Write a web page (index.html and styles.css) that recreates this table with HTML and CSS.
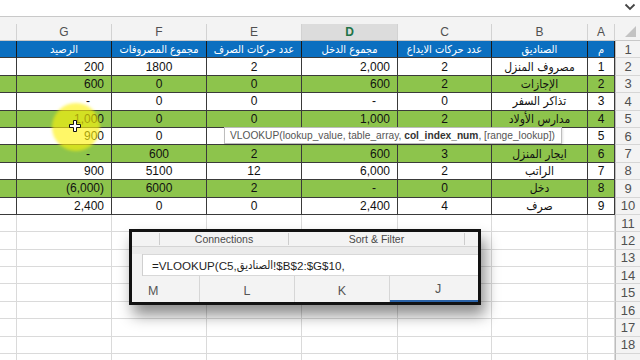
FILE: index.html
```html
<!DOCTYPE html>
<html lang="ar">
<head>
<meta charset="utf-8">
<link rel="stylesheet" href="styles.css">
</head>
<body>
<div class="screen">
  <div class="topbar">
    <svg class="chev" width="12" height="8" viewBox="0 0 12 8"><polyline points="1.5,1.5 6,6 10.5,1.5" fill="none" stroke="#444" stroke-width="1.8"/></svg>
  </div>
  <div class="gapband"></div>
  <div class="sheet">
    <!-- column headers -->
    <div class="ch"></div><div class="ch">G</div><div class="ch">F</div><div class="ch">E</div><div class="ch sel">D</div><div class="ch">C</div><div class="ch">B</div><div class="ch">A</div><div class="ch corner"><span class="tri"></span></div>
    <!-- row 1 -->
    <div class="c t hb"></div><div class="c t hb m ar">الرصيد</div><div class="c t hb m ar">مجموع المصروفات</div><div class="c t hb m ar">عدد حركات الصرف</div><div class="c t hb m ar">مجموع الدخل</div><div class="c t hb m ar">عدد حركات الايداع</div><div class="c t hb m ar">الصناديق</div><div class="c t hb m ar">م</div><div class="rn">1</div>
    <!-- row 2 -->
    <div class="c t"></div><div class="c t r">200</div><div class="c t m">1800</div><div class="c t m">2</div><div class="c t r">2,000</div><div class="c t m">2</div><div class="c t m ar body">مصروف المنزل</div><div class="c t m">1</div><div class="rn">2</div>
    <!-- row 3 -->
    <div class="c t g"></div><div class="c t g r">600</div><div class="c t g m">0</div><div class="c t g m">0</div><div class="c t g r">600</div><div class="c t g m">2</div><div class="c t g m ar body">الإجازات</div><div class="c t g m">2</div><div class="rn">3</div>
    <!-- row 4 -->
    <div class="c t"></div><div class="c t r dash">-</div><div class="c t m">0</div><div class="c t m">0</div><div class="c t r dash">-</div><div class="c t m">0</div><div class="c t m ar body">تذاكر السفر</div><div class="c t m">3</div><div class="rn">4</div>
    <!-- row 5 -->
    <div class="c t g"></div><div class="c t g r">1,000</div><div class="c t g m">0</div><div class="c t g m">0</div><div class="c t g r">1,000</div><div class="c t g m">2</div><div class="c t g m ar body">مدارس الأولاد</div><div class="c t g m">4</div><div class="rn">5</div>
    <!-- row 6 -->
    <div class="c t"></div><div class="c t r">900</div><div class="c t m">0</div><div class="c t m"></div><div class="c t r"></div><div class="c t m"></div><div class="c t m"></div><div class="c t m">5</div><div class="rn">6</div>
    <!-- row 7 -->
    <div class="c t g"></div><div class="c t g r dash">-</div><div class="c t g m">600</div><div class="c t g m">2</div><div class="c t g r">600</div><div class="c t g m">3</div><div class="c t g m ar body">ايجار المنزل</div><div class="c t g m">6</div><div class="rn">7</div>
    <!-- row 8 -->
    <div class="c t"></div><div class="c t r">900</div><div class="c t m">5100</div><div class="c t m">12</div><div class="c t r">6,000</div><div class="c t m">2</div><div class="c t m ar body">الراتب</div><div class="c t m">7</div><div class="rn">8</div>
    <!-- row 9 -->
    <div class="c t g"></div><div class="c t g r">(6,000)</div><div class="c t g m">6000</div><div class="c t g m">2</div><div class="c t g r dash">-</div><div class="c t g m">0</div><div class="c t g m ar body">دخل</div><div class="c t g m">8</div><div class="rn">9</div>
    <!-- row 10 -->
    <div class="c t"></div><div class="c t r">2,400</div><div class="c t m">0</div><div class="c t m">0</div><div class="c t r">2,400</div><div class="c t m">4</div><div class="c t m ar body">صرف</div><div class="c t m">9</div><div class="rn">10</div>
    <!-- empty rows -->
    <div class="c"></div><div class="c"></div><div class="c"></div><div class="c"></div><div class="c"></div><div class="c"></div><div class="c"></div><div class="c"></div><div class="rn">11</div>
    <div class="c"></div><div class="c"></div><div class="c"></div><div class="c"></div><div class="c"></div><div class="c"></div><div class="c"></div><div class="c"></div><div class="rn">12</div>
    <div class="c"></div><div class="c"></div><div class="c"></div><div class="c"></div><div class="c"></div><div class="c"></div><div class="c"></div><div class="c"></div><div class="rn">13</div>
    <div class="c"></div><div class="c"></div><div class="c"></div><div class="c"></div><div class="c"></div><div class="c"></div><div class="c"></div><div class="c"></div><div class="rn">14</div>
    <div class="c"></div><div class="c"></div><div class="c"></div><div class="c"></div><div class="c"></div><div class="c"></div><div class="c"></div><div class="c"></div><div class="rn">15</div>
    <div class="c"></div><div class="c"></div><div class="c"></div><div class="c"></div><div class="c"></div><div class="c"></div><div class="c"></div><div class="c"></div><div class="rn">16</div>
    <div class="c"></div><div class="c"></div><div class="c"></div><div class="c"></div><div class="c"></div><div class="c"></div><div class="c"></div><div class="c"></div><div class="rn">17</div>
    <div class="c"></div><div class="c"></div><div class="c"></div><div class="c"></div><div class="c"></div><div class="c"></div><div class="c"></div><div class="c"></div><div class="rn">18</div>
    <div class="c"></div><div class="c"></div><div class="c"></div><div class="c"></div><div class="c"></div><div class="c"></div><div class="c"></div><div class="c"></div><div class="rn"></div>
  </div>

  <div class="tooltip">VLOOKUP(lookup_value, table_array, <b>col_index_num</b>, [range_lookup])</div>

  <div class="spot"></div>
  <svg class="cursor" width="12" height="12" viewBox="0 0 12 12"><path d="M4.5 0.5h3v4h4v3h-4v4h-3v-4h-4v-3h4z" fill="#fff" stroke="#111" stroke-width="1"/></svg>

  <div class="popup">
    <div class="ribbon">
      <div class="rg rg-stub"></div>
      <div class="rg rg-conn">Connections</div>
      <div class="rg rg-sort">Sort &amp; Filter</div>
      <div class="rg rg-end"></div>
    </div>
    <div class="ribband"></div>
    <div class="fbar">
      <div class="fstub"></div>
      <div class="finput">=VLOOKUP(C5,<span class="ar">الصناديق</span>!$B$2:$G$10,</div>
    </div>
    <div class="pcols">
      <div class="pc pc-m">M</div>
      <div class="pc pc-l">L</div>
      <div class="pc pc-k">K</div>
      <div class="pc pc-j">J</div>
    </div>
  </div>
</div>
</body>
</html>
```
FILE: styles.css
```css
* { box-sizing: border-box; }
html, body { margin: 0; padding: 0; background: #fff; }
body { font-family: "Liberation Sans", "DejaVu Sans", sans-serif; }
.screen { position: relative; width: 640px; height: 360px; overflow: hidden; background: #fff; }

.topbar { position: relative; height: 17px; background: #fff; border-bottom: 1px solid #c9c9c9; }
.chev { position: absolute; left: 624px; top: 3px; }
.gapband { height: 7px; background: #f3f3f3; }

.sheet {
  display: grid;
  grid-template-columns: 17px 95px 95px 95px 96px 94px 96px 27px 25px;
  grid-template-rows: 17px;
  grid-auto-rows: 17.4px;
}
.ch {
  background: #f3f3f3;
  border-right: 1px solid #d2d2d2;
  border-bottom: 1px solid #c8c8c8;
  color: #505050;
  font-size: 12px;
  display: flex; align-items: center; justify-content: center;
}
.ch.sel { background: #dcdcdc; color: #217346; font-weight: bold; border-bottom: 1px solid #b5b5b5; }
.ch.corner { position: relative; border-right: none; }
.tri {
  position: absolute; right: 4px; bottom: 3px;
  width: 0; height: 0;
  border-left: 11px solid transparent;
  border-bottom: 11px solid #c3c3c3;
}

.c {
  border-right: 1px solid #dadada;
  border-bottom: 1px solid #dadada;
  font-size: 12px;
  color: #111;
  display: flex; align-items: center;
  white-space: nowrap; overflow: hidden;
  padding: 0 7px;
}
.ar { font-family: "DejaVu Sans Condensed", "DejaVu Sans", sans-serif; font-stretch: condensed; font-size: 11px; }
.ar.body { font-size: 12px; }
.c.t { border-right-color: #3a3a3a; border-bottom-color: #3a3a3a; }
.c.hb { background: #0b6fc0; color: #fff; border-right-color: #1a1a1a; }
.c.g { background: #8dc44c; }
.c.r { justify-content: flex-end; }
.c.m { justify-content: center; }
.c.dash { padding-right: 21px; }

.rn {
  background: #f3f3f3;
  border-left: 1px solid #bdbdbd;
  border-bottom: 1px solid #d6d6d6;
  color: #505050;
  font-size: 13px;
  display: flex; align-items: center; justify-content: center;
}

.tooltip {
  position: absolute; left: 224px; top: 127px;
  height: 17px;
  background: #fff;
  border: 1px solid #bdbdbd;
  box-shadow: 1px 1px 2px rgba(0,0,0,0.12);
  color: #555;
  font-size: 10.2px;
  line-height: 15px;
  padding: 0 6px 0 5px;
  white-space: nowrap;
}
.tooltip b { color: #333; }

.spot {
  position: absolute; left: 52px; top: 103px;
  width: 48px; height: 48px; border-radius: 50%;
  background: rgba(255, 242, 10, 0.62);
  filter: blur(1.5px);
}
.cursor { position: absolute; left: 69px; top: 120px; }

.popup {
  position: absolute; left: 129px; top: 229px;
  width: 352px; height: 76px;
  border: 3px solid #121212;
  background: #f3f3f3;
  box-shadow: 4px 10px 14px rgba(0,0,0,0.45);
  display: flex; flex-direction: column;
  overflow: hidden;
}
.ribbon { height: 14px; display: flex; background: #f3f3f3; }
.rg {
  border-right: 1px solid #cdcdcd;
  font-size: 10.5px; color: #4a4a4a;
  display: flex; align-items: center; justify-content: center;
  margin: 1px 0;
}
.rg-stub { width: 28px; }
.rg-conn { width: 129px; }
.rg-sort { width: 176px; }
.rg-end { flex: 1; border-right: none; }
.ribband { height: 8px; background: #ebebeb; border-top: 1px solid #d4d4d4; }
.fbar { height: 22px; display: flex; }
.fstub { width: 11px; background: #f3f3f3; border-right: 1px solid #cfcfcf; }
.finput {
  flex: 1; background: #fff;
  border-top: 1px solid #d8d8d8; border-bottom: 1px solid #d8d8d8;
  font-size: 11.6px; color: #1e1e1e;
  display: flex; align-items: center;
  padding-left: 9px;
  white-space: pre;
}
.finput .ar { font-size: 11.2px; }
.pcols { height: 26px; display: flex; background: #f3f3f3; }
.pc {
  border-right: 1px solid #d6d6d6;
  font-size: 12.5px; color: #555;
  display: flex; align-items: flex-end; justify-content: center;
  padding-bottom: 4px;
}
.pc-m { width: 68px; justify-content: flex-start; padding-left: 16px; }
.pc-l { width: 95px; }
.pc-k { width: 95px; }
.pc-j { flex: 1; border-right: none; border-bottom: 2px solid #2b63a8; padding-left: 8px; }
```
